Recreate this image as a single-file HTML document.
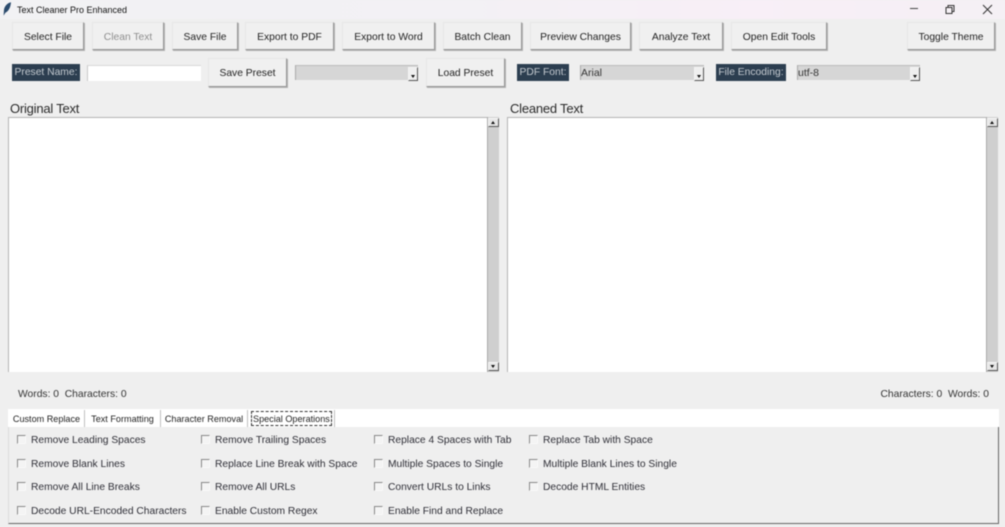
<!DOCTYPE html>
<html><head><meta charset="utf-8"><style>
html,body{margin:0;padding:0;width:1005px;height:527px;overflow:hidden;background:#efefef}
#r{position:relative;width:1005px;height:527px;overflow:hidden;background:#efefef;font-family:"Liberation Sans",sans-serif;font-size:10.3px;color:#222;filter:blur(.4px)}
#r div{position:absolute;box-sizing:border-box;white-space:nowrap}
.b{background:#f0f0f0;border:1px solid;border-color:#e6e6e6 #969696 #969696 #e6e6e6;box-shadow:1px 1px 0 #b4b4b4;text-align:center;color:#222}
.t1{top:22px;height:28px;line-height:29px}
.t2{top:58px;height:29px;line-height:29px}
.l{top:64px;height:17px;line-height:18px;background:#2c3e50;color:#c4cad0;text-align:center}
.c{top:65px;height:15px;background:#d6d6d6;border-left:1px solid #aaa;border-top:1px solid #bbb;line-height:15px;padding-left:0;color:#333;font-size:10.5px}
.a{right:0;top:1px;width:10px;height:14px;background:#efefef;border:1px solid;border-color:#f5f5f5 #555 #555 #f5f5f5}
.a:after{content:"";position:absolute;left:2px;top:7px;border:2.5px solid transparent;border-top:3px solid #111;border-bottom:0}
.tx{top:117px;height:255px;width:479px;background:#fff;border:1px solid #b4b4b4;border-right:0;border-bottom:0}
.sb{top:117px;height:255px;width:12px;background:#cfcfcf;border-left:1px solid #aaa}
.su{left:0;top:1px;width:11px;height:9px;background:#e6e6e6;border:1px solid;border-color:#f8f8f8 #555 #555 #f8f8f8}
.sd{left:0;bottom:1px;width:11px;height:9px;background:#e6e6e6;border:1px solid;border-color:#f8f8f8 #555 #555 #f8f8f8}
.su:after{content:"";position:absolute;left:2px;top:2px;border:2.5px solid transparent;border-bottom:3px solid #111;border-top:0}
.sd:after{content:"";position:absolute;left:2px;top:2px;border:2.5px solid transparent;border-top:3px solid #111;border-bottom:0}
.h{font-size:13px;top:100px;line-height:17px;color:#2a2a2a;letter-spacing:-.22px}
.s{top:388px;line-height:13px;color:#333;font-size:10.3px}
.tab{top:410px;height:17px;line-height:18px;background:#fff;color:#222;font-size:9.1px;text-align:center;border-right:1px solid #c0c0c0}
.k{width:9px;height:9px;margin-top:1px;background:#f4f4f4;border:1px solid;border-color:#888 #f8f8f8 #f8f8f8 #888}
.o{line-height:13px;color:#2e2e36;font-size:10.25px;margin-top:1px}
</style></head><body><div id="r">
<div style="left:0;top:0;width:1005px;height:19px;background:linear-gradient(90deg,#f2f2f4 0,#f3f1f5 45%,#f8eff7 75%,#f5f0f5 100%)"></div>
<svg style="position:absolute;left:2px;top:2px" width="10" height="14" viewBox="0 0 10 14"><path d="M9 .3C5.5 1 2.8 3.8 2 7.5L1.6 13.6 3.6 10.5C6.5 9.5 8.6 5.5 9 .3Z" fill="#2a4a6c"/></svg>
<div style="left:17px;top:3px;line-height:14px;font-size:9px;color:#111">Text Cleaner Pro Enhanced</div>
<svg style="position:absolute;left:905px;top:2px" width="100" height="14" viewBox="0 0 100 14"><path d="M5 6.5H13" stroke="#444" fill="none"/><path d="M41 5.5h6v6h-6zM43 5.5v-2h6v6h-2" stroke="#333" fill="none"/><path d="M78 3l9 9M87 3l-9 9" stroke="#333" fill="none"/></svg>

<div class="b t1" style="left:12px;width:72px">Select File</div>
<div class="b t1" style="left:92px;width:72px;color:#8e8e8e">Clean Text</div>
<div class="b t1" style="left:172px;width:66px">Save File</div>
<div class="b t1" style="left:245px;width:89px">Export to PDF</div>
<div class="b t1" style="left:342px;width:93px">Export to Word</div>
<div class="b t1" style="left:443px;width:79px">Batch Clean</div>
<div class="b t1" style="left:530px;width:101px">Preview Changes</div>
<div class="b t1" style="left:639px;width:84px">Analyze Text</div>
<div class="b t1" style="left:731px;width:96px">Open Edit Tools</div>
<div class="b t1" style="left:907px;width:88px">Toggle Theme</div>

<div class="l" style="left:12px;width:68px">Preset Name:</div>
<div style="left:87px;top:65px;width:114px;height:16px;background:#fff;border-left:1px solid #c8c8c8;border-top:1px solid #d8d8d8"></div>
<div class="b t2" style="left:208px;width:79px">Save Preset</div>
<div class="c" style="left:295px;width:123px"><div class="a"></div></div>
<div class="b t2" style="left:426px;width:79px">Load Preset</div>
<div class="l" style="left:517px;width:52px">PDF Font:</div>
<div class="c" style="left:580px;width:124px">Arial<div class="a"></div></div>
<div class="l" style="left:716px;width:70px">File Encoding:</div>
<div class="c" style="left:797px;width:123px">utf-8<div class="a"></div></div>

<div class="h" style="left:10px">Original Text</div>
<div class="h" style="left:510px">Cleaned Text</div>
<div class="tx" style="left:8px"></div>
<div class="sb" style="left:487px"><div class="su"></div><div class="sd"></div></div>
<div class="tx" style="left:507px"></div>
<div class="sb" style="left:986px"><div class="su"></div><div class="sd"></div></div>

<div class="s" style="left:18px">Words: 0&nbsp; Characters: 0</div>
<div class="s" style="right:16px">Characters: 0&nbsp; Words: 0</div>

<div style="left:8px;top:409px;width:991px;height:18px;background:#fff"></div>
<div class="tab" style="left:9px;width:76px">Custom Replace</div>
<div class="tab" style="left:85px;width:76px">Text Formatting</div>
<div class="tab" style="left:161px;width:87px">Character Removal</div>
<div class="tab" style="left:249px;width:86px"><div style="left:2px;top:1px;width:81px;height:15px;line-height:15px;border:1px dashed #333;overflow:hidden;text-align:left;padding-left:1px">Special Operations</div></div>

<div style="left:8px;top:427px;width:991px;height:97px;border-right:1px solid #666;border-bottom:1px solid #666;border-left:1px solid #ddd"></div>

<div class="k" style="left:17px;top:434px"></div><div class="o" style="left:31px;top:433px">Remove Leading Spaces</div>
<div class="k" style="left:17px;top:458px"></div><div class="o" style="left:31px;top:457px">Remove Blank Lines</div>
<div class="k" style="left:17px;top:481px"></div><div class="o" style="left:31px;top:480px">Remove All Line Breaks</div>
<div class="k" style="left:17px;top:505px"></div><div class="o" style="left:31px;top:504px">Decode URL-Encoded Characters</div>

<div class="k" style="left:201px;top:434px"></div><div class="o" style="left:215px;top:433px">Remove Trailing Spaces</div>
<div class="k" style="left:201px;top:458px"></div><div class="o" style="left:215px;top:457px">Replace Line Break with Space</div>
<div class="k" style="left:201px;top:481px"></div><div class="o" style="left:215px;top:480px">Remove All URLs</div>
<div class="k" style="left:201px;top:505px"></div><div class="o" style="left:215px;top:504px">Enable Custom Regex</div>

<div class="k" style="left:374px;top:434px"></div><div class="o" style="left:388px;top:433px">Replace 4 Spaces with Tab</div>
<div class="k" style="left:374px;top:458px"></div><div class="o" style="left:388px;top:457px">Multiple Spaces to Single</div>
<div class="k" style="left:374px;top:481px"></div><div class="o" style="left:388px;top:480px">Convert URLs to Links</div>
<div class="k" style="left:374px;top:505px"></div><div class="o" style="left:388px;top:504px">Enable Find and Replace</div>

<div class="k" style="left:529px;top:434px"></div><div class="o" style="left:543px;top:433px">Replace Tab with Space</div>
<div class="k" style="left:529px;top:458px"></div><div class="o" style="left:543px;top:457px">Multiple Blank Lines to Single</div>
<div class="k" style="left:529px;top:481px"></div><div class="o" style="left:543px;top:480px">Decode HTML Entities</div>
</div></body></html>
